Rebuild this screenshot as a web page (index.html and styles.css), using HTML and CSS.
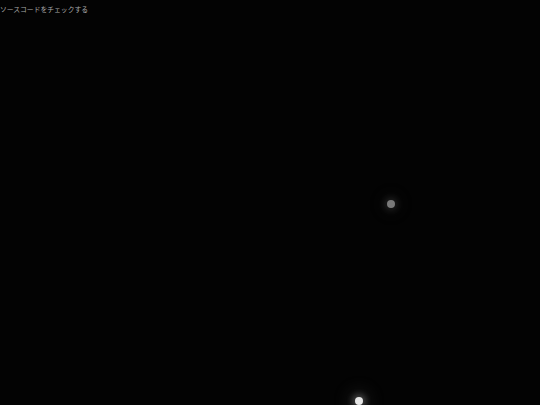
FILE: index.html
```html
<!DOCTYPE html>
<html lang="ja">
<head>
<meta charset="utf-8">
<link rel="stylesheet" href="styles.css">
</head>
<body>
<div class="stage">
  <a class="source-link">ソースコードをチェックする</a>
  <span class="star star-dim"></span>
  <span class="star star-bright"></span>
</div>
</body>
</html>
```
FILE: styles.css
```css
html, body {
  margin: 0;
  padding: 0;
  background: #030303;
  width: 540px;
  height: 405px;
  overflow: hidden;
}
.stage {
  position: relative;
  width: 540px;
  height: 405px;
  background: #030303;
}
.source-link {
  display: block;
  padding-top: 4px;
  font-family: "Noto Sans CJK JP", sans-serif;
  font-size: 6.8px;
  line-height: 10px;
  color: #a8a8a8;
  letter-spacing: 0;
}
.star {
  position: absolute;
  border-radius: 50%;
}
.star-dim {
  left: 387px;
  top: 200px;
  width: 8px;
  height: 8px;
  background: #7a7a7a;
  box-shadow: 0 0 6px 3px rgba(110,110,110,0.22), 0 0 14px 8px rgba(80,80,80,0.07);
}
.star-bright {
  left: 355px;
  top: 397px;
  width: 8px;
  height: 8px;
  background: #e6e6e6;
  box-shadow: 0 0 6px 3px rgba(200,200,200,0.3), 0 0 16px 9px rgba(140,140,140,0.1);
}
```
